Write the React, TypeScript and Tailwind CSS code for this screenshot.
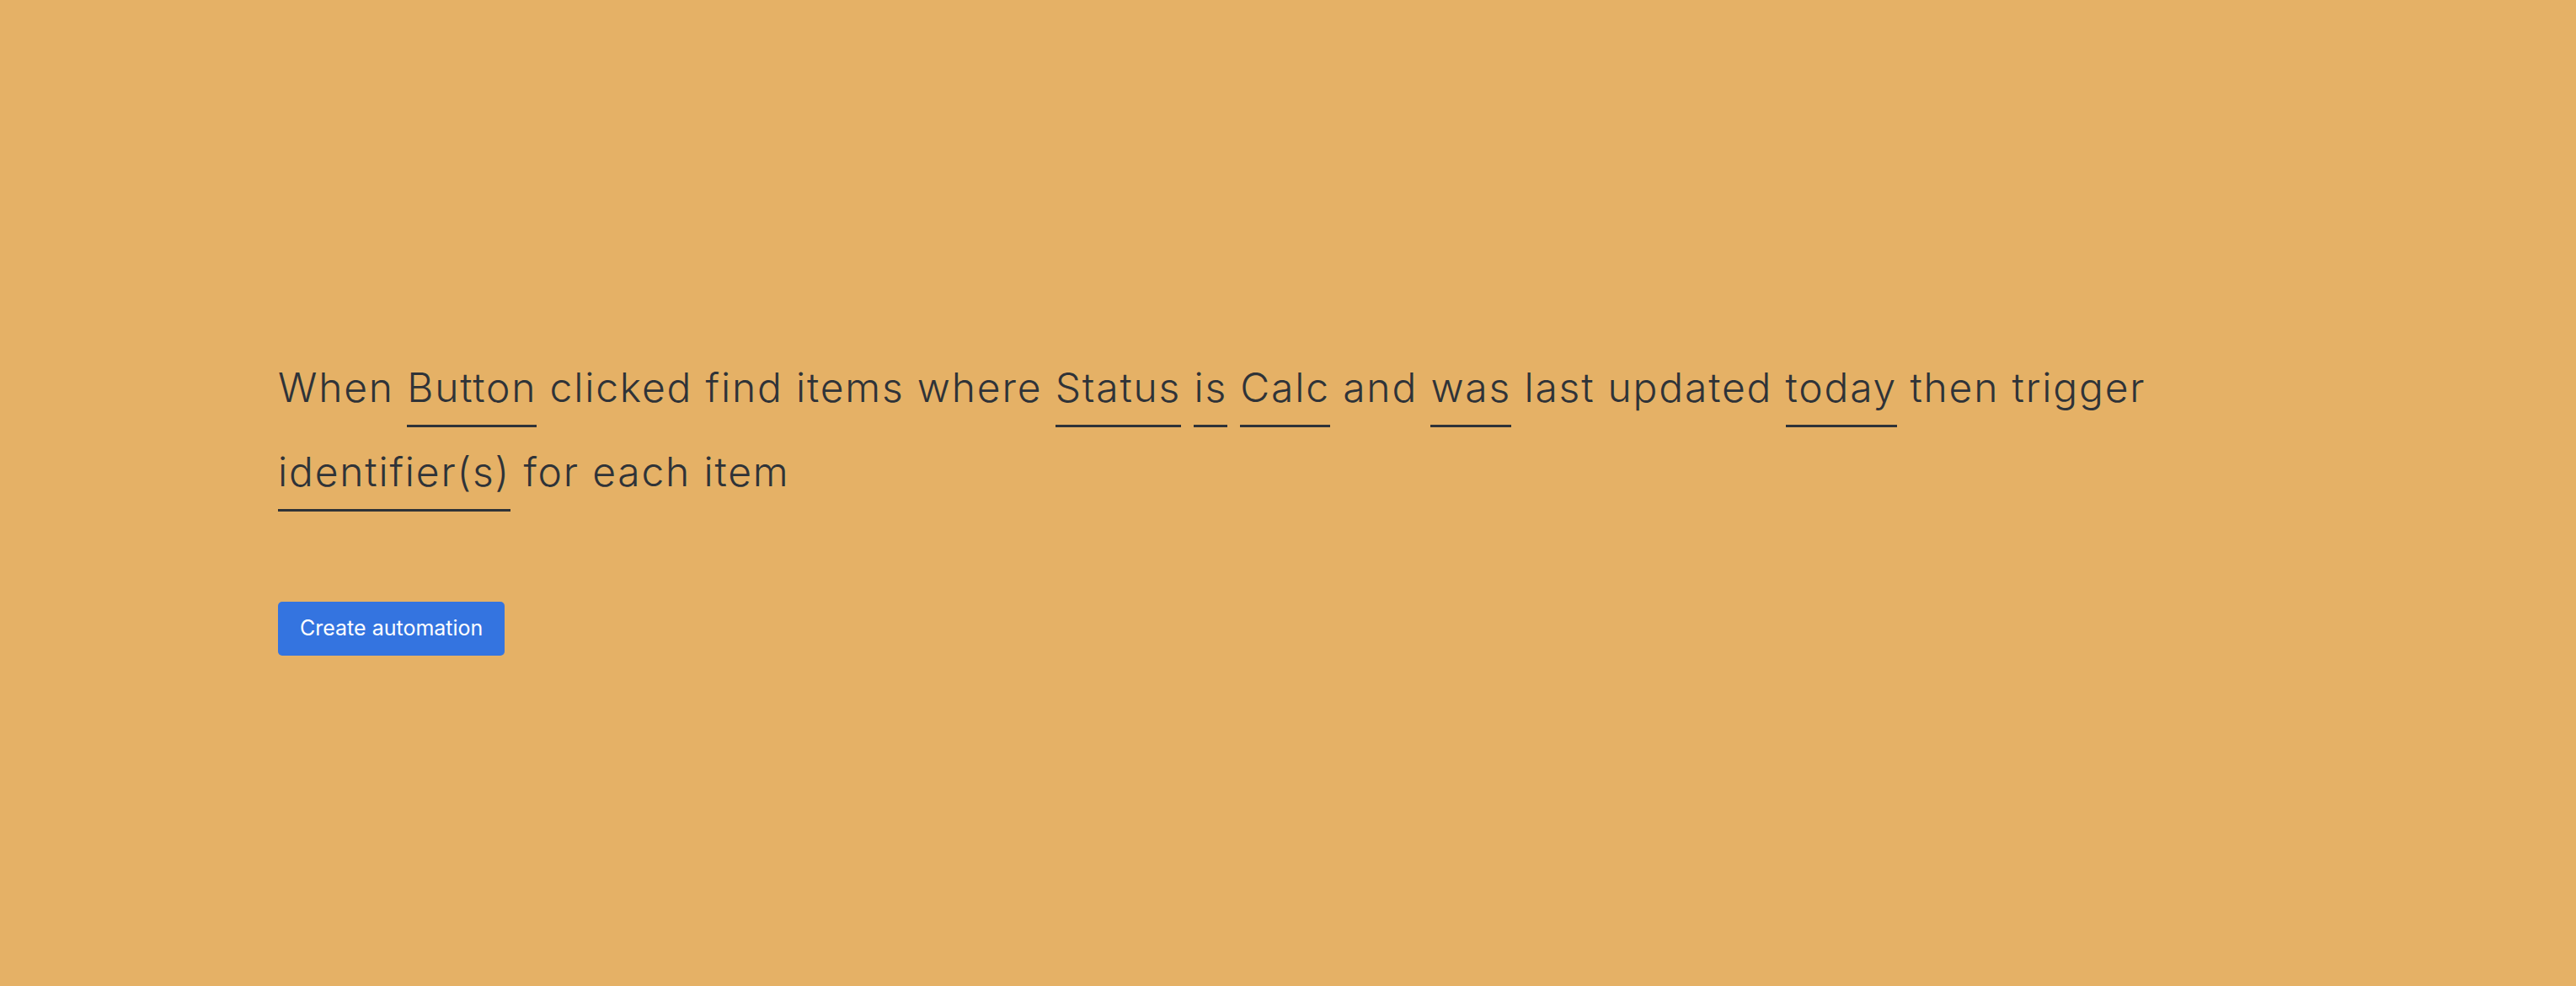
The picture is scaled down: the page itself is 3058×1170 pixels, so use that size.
import React from "react";

const Field = ({ children }: { children: React.ReactNode }) => (
  <span className="inline-block border-b-[3px] border-[#2f3338] leading-[88px]">{children}</span>
);

const App = () => {
  return (
    <div className="min-h-[1170px] w-full bg-[#e5b166] font-['Inter',sans-serif]">
      <div className="pl-[330px] pt-[410px]">
        {/* Sentence builder */}
        <p className="w-[2250px] text-[48px] font-light leading-[100px] tracking-[1.8px] text-[#2f3338]">
          When <Field>Button</Field> clicked find items where <Field>Status</Field> <Field>is</Field>{" "}
          <Field>Calc</Field> and <Field>was</Field> last updated <Field>today</Field> then trigger{" "}
          <Field>identifier(s)</Field> for each item
        </p>

        <button className="mt-[104px] h-[64px] rounded-[5px] bg-[#3474e0] px-[26px] text-[25px] text-white">
          Create automation
        </button>
      </div>
    </div>
  );
};

export default App;
